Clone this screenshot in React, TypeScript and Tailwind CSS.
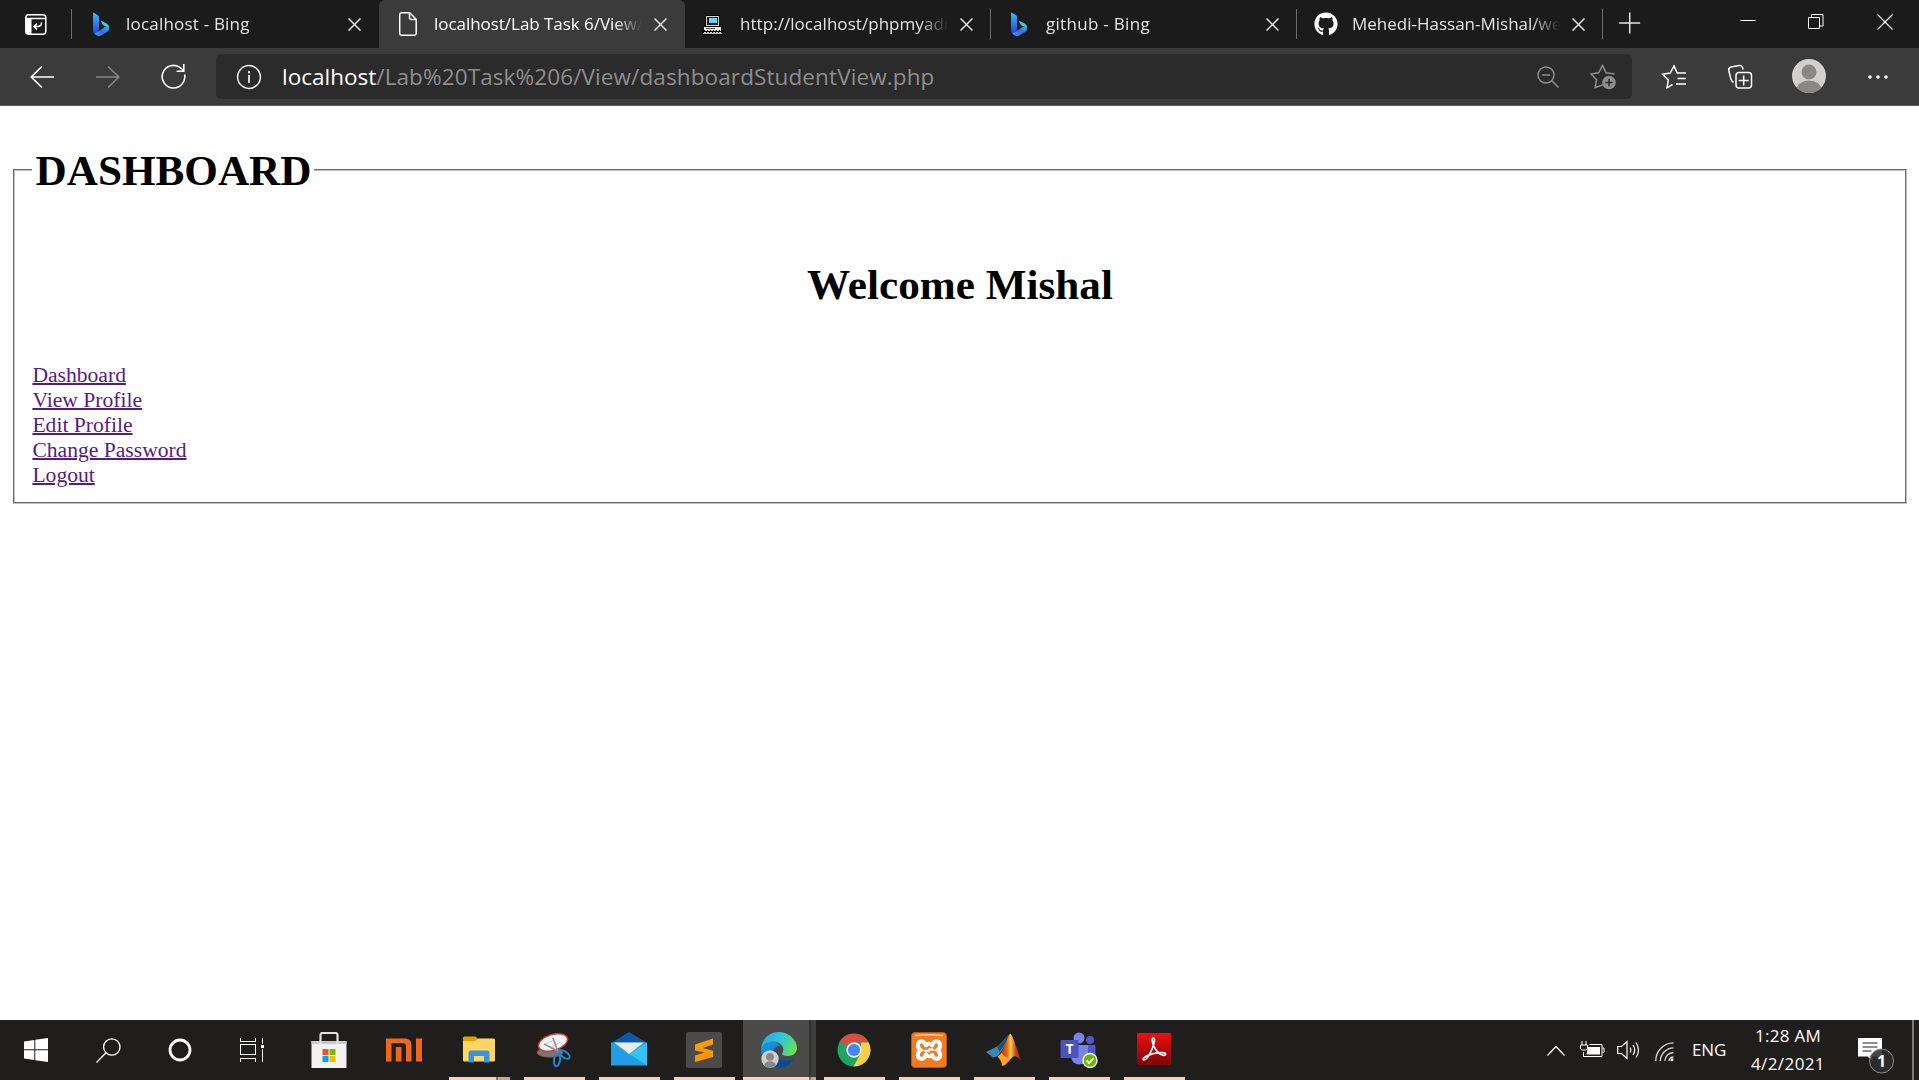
import { type ReactNode } from "react";
import { FaGithub } from "react-icons/fa";

function BingIcon() {
  return (
    <svg className="-ml-[3px]" width="18" height="24" viewBox="0 0 18 24">
      <defs>
        <linearGradient id="bing-stem" x1="0" y1="0" x2="0" y2="1">
          <stop offset="0" stopColor="#37bdff" />
          <stop offset="1" stopColor="#2440e0" />
        </linearGradient>
        <linearGradient id="bing-base" x1="0" y1="1" x2="1" y2="0">
          <stop offset="0" stopColor="#2ea6f5" />
          <stop offset="0.5" stopColor="#3a67ea" />
          <stop offset="1" stopColor="#29b7ee" />
        </linearGradient>
      </defs>
      <path d="M1 1.2c0-.6.6-.8 1-.5l4.200 2.700c.6.4.8.8.8 1.500V18l-4 4C1.600 21 1 20 1 18z" fill="url(#bing-stem)" />
      <path d="M8.600 8.500l6 3c2 1.200 2.600 3 2.300 5l-2-1.500-4-2z" fill="#25dbe5" />
      <path d="M2.500 21.500L13 15c2-.8 4-.3 4 1.500 0 1.600-.6 2.600-2 3.500l-5.500 3.200c-2.600 1.400-5.500.6-7-1.700z" fill="url(#bing-base)" />
    </svg>
  );
}

function PageIcon() {
  return (
    <svg width="18" height="24" viewBox="0 0 18 24" fill="none" stroke="#fff" strokeWidth="1.500">
      <path d="M2.700.8h8l6.500 6.500v14a2 2 0 0 1-2 2H2.700a2 2 0 0 1-2-2v-18.500a2 2 0 0 1 2-2z" />
      <path d="M10.500.8v5a1.800 1.800 0 0 0 1.800 1.800h5" />
    </svg>
  );
}

function ComputerIcon() {
  return (
    <svg className="mt-[2px] -ml-[3px]" width="22" height="20" viewBox="0 0 22 20" shapeRendering="crispEdges">
      <rect x="3" y="0" width="15" height="12" fill="#050505" />
      <rect x="4" y="1" width="13" height="10" fill="#d9d5cc" />
      <rect x="5" y="2" width="11" height="8" fill="#10212b" />
      <rect x="7" y="3" width="8" height="5" fill="#6fd0f5" />
      <rect x="2" y="12" width="17" height="3" fill="#eeeae0" />
      <rect x="4" y="13" width="9" height="1" fill="#555" />
      <rect x="0" y="15" width="22" height="5" fill="#050505" />
      <path d="M3 15.500h16M2 17.500h18" stroke="#d8d4ca" strokeDasharray="2 1" />
      <rect x="1" y="18" width="19" height="1" fill="#c9c5bb" />
    </svg>
  );
}

const CloseX = () => (
  <svg width="13" height="13" viewBox="0 0 13 13" stroke="#e6e6e6" strokeWidth="1.500">
    <path d="M.5.5l12 12M12.500.5l-12 12" />
  </svg>
);

function Tab({ icon, title, track, active, divider }: { icon: ReactNode; title: string; track: string; active?: boolean; divider?: boolean }) {
  return (
    <div className={`relative flex h-12 w-[306px] shrink-0 items-center ${active ? "rounded-t-md bg-[#3b3b3b]" : "text-[#e4e4e4]"}`}>
      <div className="ml-[17px] flex w-[24px] shrink-0 justify-center">{icon}</div>
      <div className="ml-[13px] w-[209px] shrink-0 overflow-hidden whitespace-nowrap text-[17px] leading-6 [mask-image:linear-gradient(to_right,black_180px,transparent_209px)]">
        <span className={track}>{title}</span>
      </div>
      <div className="ml-[12px]"><CloseX /></div>
      {divider && <div className="absolute top-[9px] right-0 h-[30px] w-px bg-[#6a6a6a]" />}
    </div>
  );
}

function Toolbar() {
  return (
    <div className="flex h-[58px] items-center border-b border-[#5a5a5a] bg-[#3b3b3b]">
      <svg className="ml-[30px]" width="24" height="22" viewBox="0 0 24 22" fill="none" stroke="#fff" strokeWidth="1.600"><path d="M12 .5L1.200 11 12 21.500M1.200 11H24" /></svg>
      <svg className="ml-[42px]" width="24" height="22" viewBox="0 0 24 22" fill="none" stroke="#858585" strokeWidth="1.600"><path d="M12 .5L22.800 11 12 21.500M22.800 11H0" /></svg>
      <svg className="ml-[41px] mr-px" width="25" height="25" viewBox="0 0 25 25" fill="none" stroke="#fff" strokeWidth="1.600"><path d="M23.600 10.500A11.300 11.300 0 1 1 19.500 3.800L22.800 7M22.800 0v7.200h-7.200" /></svg>
      <div className="ml-[29px] flex h-[45px] w-[1416px] items-center rounded-[5px] bg-[#2b2b2b]">
        <svg className="ml-[20px]" width="26" height="26" viewBox="0 0 26 26" fill="none" stroke="#f0f0f0" strokeWidth="1.500"><circle cx="13" cy="13" r="11.400" /><path d="M13 11v8" strokeWidth="1.800" /><path d="M13 7v2.200" strokeWidth="2" /></svg>
        <div className="ml-[20px] mt-px whitespace-nowrap text-[22.5px] leading-8 text-[#8e8e8e]">
          <span className="text-white">localhost</span><span className="tracking-[0.11px]">/Lab%20Task%206/View/dashboardStudentView.php</span>
        </div>
        <svg className="ml-auto" width="22" height="22" viewBox="0 0 22 22" fill="none" stroke="#8e8e8e" strokeWidth="1.500"><circle cx="9" cy="9" r="8" /><path d="M5 9h8M14.800 14.800L21.500 21.500" /></svg>
        <svg className="ml-[31px] mr-[15px]" width="27" height="26" viewBox="0 0 27 26" fill="none" stroke="#8e8e8e" strokeWidth="1.500"><path d="M12.500 22l-.4-.9L5.200 23.500l1.400-7.800L1 10l7.600-1.200L12.500 1.500l3.600 7.300 8.500 1.200" /><circle cx="19" cy="18.500" r="6.800" fill="#8e8e8e" stroke="none" /><path d="M19 14.800v7.400M15.300 18.500h7.400" stroke="#2b2b2b" /></svg>
      </div>
      <svg className="ml-[29px]" width="26" height="26" viewBox="0 0 26 26" fill="none" stroke="#fff" strokeWidth="1.500"><path d="M11.500 20.500L6 23.800l1.300-7.800L1.500 10.200l7.700-1.200L13 2l3.200 7H25M16.500 14.500H25M15 20H25" /></svg>
      <svg className="ml-[40px]" width="26" height="26" viewBox="0 0 26 26" fill="none" stroke="#fff" strokeWidth="1.500"><path d="M6.500 18.500C4.500 17.500 4 16 3.600 14L1.800 6.500C1.400 4.500 2.300 3.500 4 3l8-1.500c2-.4 3 .3 3.600 2l.4 2" /><rect x="9" y="8.500" width="15.500" height="15.500" rx="3" /><path d="M16.700 11.500v10M11.700 16.500h10" /></svg>
      <svg className="-mt-px ml-[39px]" width="34" height="34" viewBox="0 0 34 34"><defs><clipPath id="avatar"><circle cx="17" cy="17" r="17" /></clipPath></defs><g clipPath="url(#avatar)"><rect width="34" height="34" fill="#d2d0ce" /><circle cx="17" cy="13" r="7.500" fill="#8a8886" /><ellipse cx="17" cy="31" rx="12.500" ry="9.500" fill="#8a8886" /></g></svg>
      <svg className="ml-[42px]" width="20" height="4" viewBox="0 0 20 4" fill="#fff"><circle cx="2" cy="2" r="1.800" /><circle cx="10" cy="2" r="1.800" /><circle cx="18" cy="2" r="1.800" /></svg>
    </div>
  );
}

const StoreIcon = () => (
  <svg width="36" height="36" viewBox="0 0 36 36"><path d="M.5 9h35v27H.5z" fill="#f1f1f1" /><path d="M.5 9h35v3H.5z" fill="#c9c9c9" /><path d="M9.500 12V3a2 2 0 0 1 2-2h13a2 2 0 0 1 2 2v9" fill="none" stroke="#e2e2e2" strokeWidth="2.200" /><path d="M11.500 17h6v6h-6z" fill="#f25022" /><path d="M18.500 17h6v6h-6z" fill="#7fba00" /><path d="M11.500 24h6v6h-6z" fill="#00a4ef" /><path d="M18.500 24h6v6h-6z" fill="#ffb900" /></svg>
);
const MiIcon = () => (
  <svg width="36" height="24" viewBox="0 0 36 24" fill="#ec681c"><path d="M0 23.500V.5h18.500c4.500 0 7 2.500 7 7v16H20V8c0-1.800-.8-2.700-2.500-2.700h-12v18.200z" /><path d="M9.800 9h5.700v14.500H9.800zM30 .5h6v23h-6z" /></svg>
);
const FolderIcon = () => (
  <svg width="32" height="28" viewBox="0 0 32 28"><path d="M0 6V2a1.500 1.500 0 0 1 1.500-1.500h11L15 3v3z" fill="#dea306" /><path d="M0 5h12l3-2.500h15.500A1.500 1.500 0 0 1 32 4v20a1.500 1.500 0 0 1-1.500 1.500h-29A1.500 1.500 0 0 1 0 24z" fill="#ffd661" /><path d="M5.500 26.500V17a2.500 2.500 0 0 1 2.500-2.500h16a2.500 2.500 0 0 1 2.500 2.500v9.500H21V20H11v6.500z" fill="#3a91dc" /></svg>
);
const SnipIcon = () => (
  <svg width="34" height="36" viewBox="0 0 34 36"><ellipse cx="13" cy="20.500" rx="13" ry="4.800" fill="#777" stroke="#a33" strokeWidth=".8" /><ellipse cx="16" cy="10.500" rx="15" ry="8" transform="rotate(-17 16 10.500)" fill="#f6f6f6" stroke="#d8343a" strokeWidth="1.500" /><path d="M7 13l10-5M13 16l11-6" stroke="#ccc" /><path d="M16 6l5 14M7 12l16 8" stroke="#8d959b" strokeWidth="1.700" /><g fill="none" stroke="#1b87d0" strokeWidth="2"><ellipse cx="20" cy="28" rx="3" ry="6.300" transform="rotate(8 20 28)" /><ellipse cx="27.500" cy="22.500" rx="3" ry="6" transform="rotate(-53 27.500 22.500)" /></g></svg>
);
const MailIcon = () => (
  <svg className="-mt-[2px]" width="36" height="34" viewBox="0 0 36 34"><path d="M0 11L16.500.8a3 3 0 0 1 3 0L36 11v5H0z" fill="#0c59a8" /><path d="M0 10.500h36v23H0z" fill="#209ee3" /><path d="M18 22L36 33.500v-23z" fill="#35c1f1" /><path d="M3 10.500h30L18 22z" fill="#ececec" /></svg>
);
const SublimeIcon = () => (
  <svg width="36" height="36" viewBox="0 0 36 36"><rect width="36" height="36" rx="2.500" fill="#4a4a4a" /><path d="M9 12.500l18-6v6L16.500 16 27 18.800V25L9 30v-6.500l9.500-3L9 18.500z" fill="#ff9800" /></svg>
);
const EdgeIcon = () => (
  <svg width="36" height="36" viewBox="0 0 36 36"><defs><linearGradient id="edge-top" x1="0" y1=".3" x2="1" y2=".6"><stop offset="0" stopColor="#2aa8e0" /><stop offset=".5" stopColor="#2fc6dc" /><stop offset="1" stopColor="#6be04a" /></linearGradient><linearGradient id="edge-mid" x1="0" y1="0" x2="1" y2="1"><stop offset="0" stopColor="#1b9de2" /><stop offset="1" stopColor="#0b5cab" /></linearGradient></defs><path d="M33 27c-4 6-9 9-15 9C8 36 0 28 0 18c0-5 4-9 10-9 5 0 8 3 9 6-4 0-6 3-6 6 0 5 5 8 11 8 4 0 6-1 9-2z" fill="url(#edge-mid)" /><path d="M33 27c-4 6-9 9-15 9-5-1-9-5-9-10 0-5 3-9 8-10-4 3-4 7 0 10 5 3 10 3 16 1z" fill="#0d4a94" /><path d="M0 17C1 7 8 0 18 0s18 8 18 16c0 5-4 8-9 8-4 0-6-1-6-2.200 0-1 1.300-1.500 1.300-4.300 0-4-4-8-10.300-8C6 9.500 1 13 0 17z" fill="url(#edge-top)" /><circle cx="17.800" cy="18.500" r="4.300" fill="#474747" /><circle cx="9" cy="27" r="8.700" fill="#cfcecc" /><circle cx="9" cy="24.800" r="3.900" fill="#8a8886" /><path d="M3 33.200a6.200 5.200 0 0 1 12 0 8.700 8.700 0 0 1-12 0z" fill="#8a8886" /></svg>
);
const ChromeIcon = () => (
  <svg width="34" height="34" viewBox="0 0 34 34"><circle cx="17" cy="17" r="16.500" fill="#1fa463" /><path d="M17 17L2.700 8.700A16.500 16.500 0 0 1 31.500 9.500H17z" fill="#dc4b3e" /><path d="M24 9.500h7.700A16.500 16.500 0 0 1 16.500 33.500L24 20z" fill="#ffcd40" /><circle cx="17" cy="17" r="7.700" fill="#f1f1f1" /><circle cx="17" cy="17" r="6.100" fill="#4587f3" /></svg>
);
const XamppIcon = () => (
  <svg width="36" height="36" viewBox="0 0 36 36"><rect x=".5" y=".5" width="35" height="35" rx="3.500" fill="#f47b20" stroke="#b9560f" /><path d="M4 3.500q14-1.500 28 0" stroke="#fbc79a" strokeWidth="1.600" fill="none" /><path d="M15 18.200h6M14.800 13.500C14 10 11.500 8.800 9.500 9.500c-3.500 1-3.300 6.500 0 8.700-3.500 2.500-3.500 7.500 0 8.500 2.500.6 5-1 5.500-4.500M21.200 13.500C22 10 24.500 8.800 26.500 9.500c3.500 1 3.300 6.500 0 8.700 3.500 2.500 3.500 7.500 0 8.500-2.500.6-5-1-5.500-4.500M15 13.200c1.500-2 4.500-2 6 0M14.500 22.800c2 2 5 2 7 0" fill="none" stroke="#fff" strokeWidth="4" strokeLinecap="round" /><path d="M12.500 16.500h5M18.500 20h5" stroke="#f47b20" strokeWidth="2.500" /></svg>
);
const MatlabIcon = () => (
  <svg width="36" height="34" viewBox="0 0 36 34"><defs><linearGradient id="mat-peak" x1="0" y1="0" x2="1" y2="0"><stop offset="0" stopColor="#7c1d10" /><stop offset=".4" stopColor="#e8641b" /><stop offset=".55" stopColor="#f9cf42" /><stop offset=".75" stopColor="#d5461b" /><stop offset="1" stopColor="#8f2013" /></linearGradient></defs><path d="M0 19l11-5.500C16 10.500 20 3 24 1c-3 7-7 16-12 22L7 24.500z" fill="#3a86b9" /><path d="M11 13.500C16 10.500 20 3 24 1c-3 7-7 14-10.500 18z" fill="#1e5375" /><path d="M24 .5c4 2 6 17 11.500 27C31 23 28.500 22 26 24.500c-3 3-5 7.500-9.500 8.500-1-4-2-6.500-5-9C17 20 20 7 24 .5z" fill="url(#mat-peak)" /><path d="M11.500 24c2.500 1 4 5 5 9 3-1 5-4 7-7-3-2-5-2-8-6z" fill="#f9a72e" /></svg>
);
const TeamsIcon = () => (
  <svg width="38" height="36" viewBox="0 0 38 36"><circle cx="19" cy="6" r="5.500" fill="#7b83eb" /><circle cx="30" cy="8" r="4" fill="#5059c9" /><path d="M25 13h10.500v10a6 6 0 0 1-10.500 2z" fill="#5059c9" /><path d="M11 13h17v11c0 5-4 8.500-8.500 8.500S11 29 11 24z" fill="#7b83eb" /><rect x=".5" y="8" width="18" height="18" rx="1" fill="#4b53bc" /><text x="9.500" y="22" textAnchor="middle" fontSize="14" fontWeight="700" fill="#fff" fontFamily="Open Sans, sans-serif">T</text><circle cx="30" cy="28.500" r="7" fill="#6bb700" stroke="#fff" strokeWidth="1.300" /><path d="M26.500 28.500l2.500 2.700 4.500-5" fill="none" stroke="#fff" strokeWidth="1.800" /></svg>
);
const AcrobatIcon = () => (
  <svg className="-mt-[3px]" width="34" height="32" viewBox="0 0 34 32"><defs><linearGradient id="acro" x1="0" y1="0" x2="0" y2="1"><stop offset="0" stopColor="#f00f12" /><stop offset="1" stopColor="#7d0407" /></linearGradient></defs><rect width="34" height="32" rx="1" fill="url(#acro)" /><path d="M16.500 5c-2 0-1.700 3.500.2 8 2 4.500 6.300 9.300 10 9.300 3 0 2.500-2.600-1-2.700-5.200-.2-11.700 1.200-16.200 3.400-3.500 1.800-4 4-2.500 4 2.500 0 6-6 8.500-12C17 10.500 18.500 5 16.500 5z" fill="none" stroke="#fff" strokeWidth="1.700" /></svg>
);

const apps: { name: string; icon: ReactNode; state: "none" | "open" | "stack" | "active" }[] = [
  { name: "store", icon: <StoreIcon />, state: "none" },
  { name: "mi", icon: <MiIcon />, state: "none" },
  { name: "explorer", icon: <FolderIcon />, state: "stack" },
  { name: "snip", icon: <SnipIcon />, state: "open" },
  { name: "mail", icon: <MailIcon />, state: "open" },
  { name: "sublime", icon: <SublimeIcon />, state: "open" },
  { name: "edge", icon: <EdgeIcon />, state: "active" },
  { name: "chrome", icon: <ChromeIcon />, state: "open" },
  { name: "xampp", icon: <XamppIcon />, state: "open" },
  { name: "matlab", icon: <MatlabIcon />, state: "open" },
  { name: "teams", icon: <TeamsIcon />, state: "open" },
  { name: "acrobat", icon: <AcrobatIcon />, state: "open" },
];

function AppButton({ icon, state }: { icon: ReactNode; state: string }) {
  return (
    <div className="relative flex h-full w-[75px] items-center justify-center">
      {state === "active" && (
        <div className="absolute inset-y-0 left-[2px] flex w-[73px]">
          <div className="w-[66px] bg-[#4b4b4a]" />
          <div className="w-[2px] bg-[#303030]" />
          <div className="w-[5px] bg-[#3d3d3d]" />
        </div>
      )}
      <div className="relative">{icon}</div>
      {state === "open" && <div className="absolute bottom-0 left-[8px] h-[3px] w-[61px] bg-[#fdceb1]" />}
      {state === "stack" && (
        <div className="absolute bottom-0 left-[8px] flex h-[3px] w-[61px]">
          <div className="w-[47px] bg-[#fdceb1]" /><div className="w-[2px] bg-[#8a7365]" /><div className="w-[12px] bg-[#cba58e]" />
        </div>
      )}
      {state === "active" && (
        <div className="absolute bottom-0 left-[2px] flex h-[3px] w-[73px]">
          <div className="w-[66px] bg-[#fdceb1]" /><div className="w-[2px] bg-[#8a7365]" /><div className="w-[5px] bg-[#cba58e]" />
        </div>
      )}
    </div>
  );
}

function Taskbar() {
  return (
    <div className="flex h-[60px] items-center bg-[#1f1e1d] text-white">
      <div className="flex w-[72px] justify-center"><svg width="24" height="24" viewBox="0 0 24 24" fill="#fff"><path d="M0 3.400L10.300 2v9.300H0zM11.300 1.800L24 0v11.300H11.300zM0 12.300h10.300V22L0 20.600zM11.300 12.300H24V24l-12.700-1.800z" /></svg></div>
      <div className="flex w-[72px] justify-center"><svg width="25" height="25" viewBox="0 0 25 25" fill="none" stroke="#fff" strokeWidth="1.300"><circle cx="15.800" cy="9" r="8.200" /><path d="M10 14.800L.5 24.500" /></svg></div>
      <div className="flex w-[72px] justify-center"><svg width="24" height="24" viewBox="0 0 24 24" fill="none" stroke="#fff" strokeWidth="2.800"><circle cx="12" cy="12" r="10" /></svg></div>
      <div className="flex w-[72px] justify-center"><svg width="24" height="24" viewBox="0 0 24 24" fill="none" stroke="#fff" shapeRendering="crispEdges"><path d="M.5 0v3.500h15V0M.5 6.500h15v10H.5zM.5 23.500v-3.500h15v3.500M22.500 0v6M22.500 11v12.500" /><rect x="21" y="7" width="3" height="3" fill="#fff" stroke="none" /></svg></div>
      <div className="ml-[3px] flex h-full">{apps.map((a) => <AppButton key={a.name} icon={a.icon} state={a.state} />)}</div>
      <svg className="ml-[356px]" width="18" height="11" viewBox="0 0 18 11" fill="none" stroke="#fff" strokeWidth="1.300"><path d="M.5 10.500L9 1.500l8.500 9" /></svg>
      <svg className="ml-[15px]" width="25" height="18" viewBox="0 0 25 18" fill="none" stroke="#fff"><path d="M9.500 3.500h12.500v12H3.500V11M22.500 7h1.500v4.500h-1.500" /><path d="M8 6h12v7.500H6.500z" fill="#fff" stroke="none" /><path d="M2 0v4M6 0v4M.5 4h7v3a2 2 0 0 1-2 2h-3a2 2 0 0 1-2-2z" /></svg>
      <svg className="ml-[12px]" width="23" height="20" viewBox="0 0 23 20" fill="none" stroke="#fff" strokeWidth="1.200"><path d="M.7 6.500h3.800L10 1.500v17L4.500 13.500H.7zM13 7.500q1.700 2.500 0 5M16 5q3.500 5 0 10M19 2.500q5 7.500 0 15" /></svg>
      <svg className="ml-[15px] mt-[3px]" width="20" height="20" viewBox="0 0 20 20" fill="none" stroke="#d8d8d8" strokeWidth="1.300"><path d="M.8 19A18 18 0 0 1 18.500.8M5.300 19A13.500 13.500 0 0 1 18.500 5.800M9.800 19a9 9 0 0 1 8.700-8.500M14 19a4.500 4.500 0 0 1 4.500-4" /><circle cx="17" cy="17.800" r="1.500" fill="#fff" stroke="none" /></svg>
      <div className="ml-[17px] w-[34px] whitespace-nowrap text-[17px] leading-6"><span className="tracking-[-0.1px]">ENG</span></div>
      <div className="ml-[22px] flex w-[80px] flex-col items-center whitespace-nowrap text-[17px] leading-[28px]"><span className="tracking-[0.3px]">1:28 AM</span><span className="tracking-[0.4px]">4/2/2021</span></div>
      <svg className="ml-[30px] mt-[12px]" width="38" height="38" viewBox="0 0 38 38"><path d="M0 1h24v18.500H14.500v4.500L9.500 19.500H0z" fill="#fff" /><path d="M4.500 6h15M4.500 10h15M4.500 14h9" stroke="#1f1e1d" strokeWidth="1.200" /><circle cx="23.500" cy="24" r="12" fill="#2e2e2e" fillOpacity=".88" stroke="#8b8b8b" /><text x="23.500" y="29.500" textAnchor="middle" fontSize="16" fontWeight="700" fill="#fff" fontFamily="Open Sans, sans-serif">1</text></svg>
      <div className="ml-auto mr-[5px] h-full w-[2px] bg-[#7b7b7b]" />
    </div>
  );
}

const links = ["Dashboard", "View Profile", "Edit Profile", "Change Password", "Logout"];

export default function App() {
  return (
    <div className="flex h-[1080px] w-[1919px] flex-col overflow-hidden bg-white font-['Open_Sans',sans-serif] text-white">
      <div className="flex h-12 shrink-0 bg-[#1b1b1b]">
        <div className="relative flex w-[73px] items-center pl-[25px]">
          <svg width="22" height="21" viewBox="0 0 22 21" fill="none" stroke="#fff" strokeWidth="1.500"><rect x=".8" y=".8" width="20" height="19.400" rx="3" /><path d="M1 4.500h20" /><path d="M1 5h5.500v15H3a2 2 0 0 1-2-2z" fill="#fff" stroke="none" /><path d="M16.500 8.500c0 3-1.500 4-4 4H9.500M12 9.500l-3 3 3 3" /></svg>
          <div className="absolute top-[9px] right-px h-[30px] w-px bg-[#6a6a6a]" />
        </div>
        <Tab icon={<BingIcon />} title="localhost - Bing" track="-ml-px tracking-[0.2px]" />
        <Tab icon={<PageIcon />} title="localhost/Lab Task 6/View/" track="ml-px tracking-[-0.04px]" active />
        <Tab icon={<ComputerIcon />} title="http://localhost/phpmyadmin" track="ml-px tracking-[0.05px]" divider />
        <Tab icon={<BingIcon />} title="github - Bing" track="ml-px tracking-[0.3px]" divider />
        <Tab icon={<FaGithub size={24} color="#fff" />} title="Mehedi-Hassan-Mishal/web" track="ml-px" divider />
        <svg className="mt-[12px] ml-[16px]" width="22" height="22" viewBox="0 0 22 22" stroke="#e6e6e6" strokeWidth="1.500"><path d="M10.700.5v21M.2 11h21" /></svg>
        <svg className="mt-[14px] ml-auto" width="16" height="16" viewBox="0 0 16 16" stroke="#fff"><path d="M.5 6.500h15" /></svg>
        <svg className="mt-[14px] ml-[52px]" width="16" height="16" viewBox="0 0 16 16" fill="none" stroke="#fff"><path d="M.5 3.500h11v11H.5zM3.500 3.500V.5h11.500v11.500h-3.500" /></svg>
        <svg className="mt-[14px] mr-[26px] ml-[53px]" width="16" height="16" viewBox="0 0 16 16" stroke="#fff" strokeWidth="1.100"><path d="M.5.5l15 15M15.500.5l-15 15" /></svg>
      </div>
      <Toolbar />
      <main className="flex-1 font-['Liberation_Serif',serif] text-[21.6px] leading-[25px] text-black">
        <fieldset className="mr-[12px] ml-[13px] mt-[10px] border-2 border-[#c0c0c0] px-[17px] pb-[14px] [border-style:groove]">
          <legend className="pr-[2.700px] pl-[3.500px]"><h1 className="my-[28.900px] translate-y-px text-[43.2px] leading-[50px] font-bold">DASHBOARD</h1></legend>
          <h1 className="mt-[36px] mb-[53px] text-center text-[43.2px] leading-[50px] font-bold">Welcome Mishal</h1>
          <nav className="flex flex-col items-start pl-[0.4px]">
            {links.map((l) => <a key={l} className="text-[#551a8b] underline decoration-2" href="#">{l}</a>)}
          </nav>
        </fieldset>
      </main>
      <Taskbar />
    </div>
  );
}
